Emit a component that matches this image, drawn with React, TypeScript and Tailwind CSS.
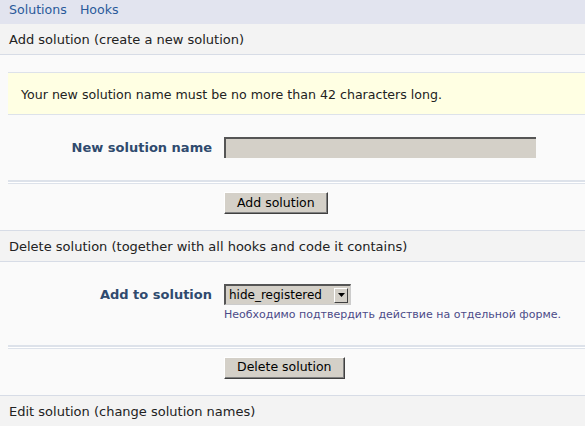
import React from 'react';

const font = { fontFamily: '"DejaVu Sans", Verdana, sans-serif' };

function SectionHeader({ title }: { title: string }) {
  return (
    <div className="h-[31px] bg-[#f3f3f3] border-b border-[#d7dce6] pl-[9px] pt-[2px] flex items-center text-[13px] text-[#222]">
      {title}
    </div>
  );
}

function Divider() {
  return (
    <div className="ml-2 border-t-2 border-b border-t-[#dde2ea] border-b-[#dde2ea] h-[4px] bg-white" />
  );
}

function ClassicButton({ label }: { label: string }) {
  return (
    <button className="h-[22px] px-[12px] bg-[#d4d0c8] text-[12.5px] text-black border border-t-white border-l-white border-r-[#404040] border-b-[#404040] shadow-[inset_-1px_-1px_0_#808080]">
      {label}
    </button>
  );
}

export default function App() {
  return (
    <div className="w-[585px] h-[426px] overflow-hidden bg-[#fafafa]" style={font}>
      {/* tabs */}
      <div className="h-[24px] bg-[#e2e4ef] flex items-start pt-[1px] leading-[17px] gap-[13px] pl-[9px] text-[12.6px] text-[#2a5a9a]">
        <span>Solutions</span>
        <span>Hooks</span>
      </div>

      <div className="border-b border-[#d7dce6]">
        <SectionHeader title="Add solution (create a new solution)" />
        <div className="pt-[17px]">
          <div className="ml-2 h-[43px] bg-[#ffffe3] border-t border-b border-[#dde2ea] flex items-center pl-[13px] pt-[3px] text-[12.6px] text-[#222]">
            Your new solution name must be no more than 42 characters long.
          </div>
          <div className="flex items-center h-[65px]">
            <div className="w-[212px] text-right text-[13px] font-bold text-[#2f4a6e]">New solution name</div>
            <div className="ml-[12px] w-[312px] h-[21px] bg-[#d4d0c8] border-t-2 border-l-2 border-t-[#555] border-l-[#555]" />
          </div>
          <Divider />
          <div className="flex pl-[224px] pt-[8px] pb-[16px]">
            <ClassicButton label="Add solution" />
          </div>
        </div>
      </div>

      <div className="border-b border-[#d7dce6]">
        <SectionHeader title="Delete solution (together with all hooks and code it contains)" />
        <div className="pt-[22px]">
          <div className="flex items-start">
            <div className="w-[212px] text-right text-[13px] font-bold text-[#2f4a6e] leading-[21px]">Add to solution</div>
            <div className="ml-[12px] flex flex-col">
              <div className="flex items-center w-[127px] h-[21px] bg-[#d4d0c8] border-t-2 border-l-2 border-t-[#555] border-l-[#555] border-r border-b border-r-[#ccc] border-b-[#ccc] pl-[3px] text-[12px] text-black">
                <span className="flex-1">hide_registered</span>
                <span className="w-[14px] h-[15px] mr-[2px] flex items-center justify-center bg-[#d4d0c8] border border-t-white border-l-white border-r-[#404040] border-b-[#404040]">
                  <svg width="7" height="4" viewBox="0 0 7 4"><path d="M0 0h7L3.5 4z" fill="#000" /></svg>
                </span>
              </div>
              <div className="mt-[2px] text-[11px] text-[#4b4a88]">Необходимо подтвердить действие на отдельной форме.</div>
            </div>
          </div>
          <div className="h-[21px]" />
          <Divider />
          <div className="flex pl-[224px] pt-[8px] pb-[16px]">
            <ClassicButton label="Delete solution" />
          </div>
        </div>
      </div>

      <SectionHeader title="Edit solution (change solution names)" />
    </div>
  );
}
